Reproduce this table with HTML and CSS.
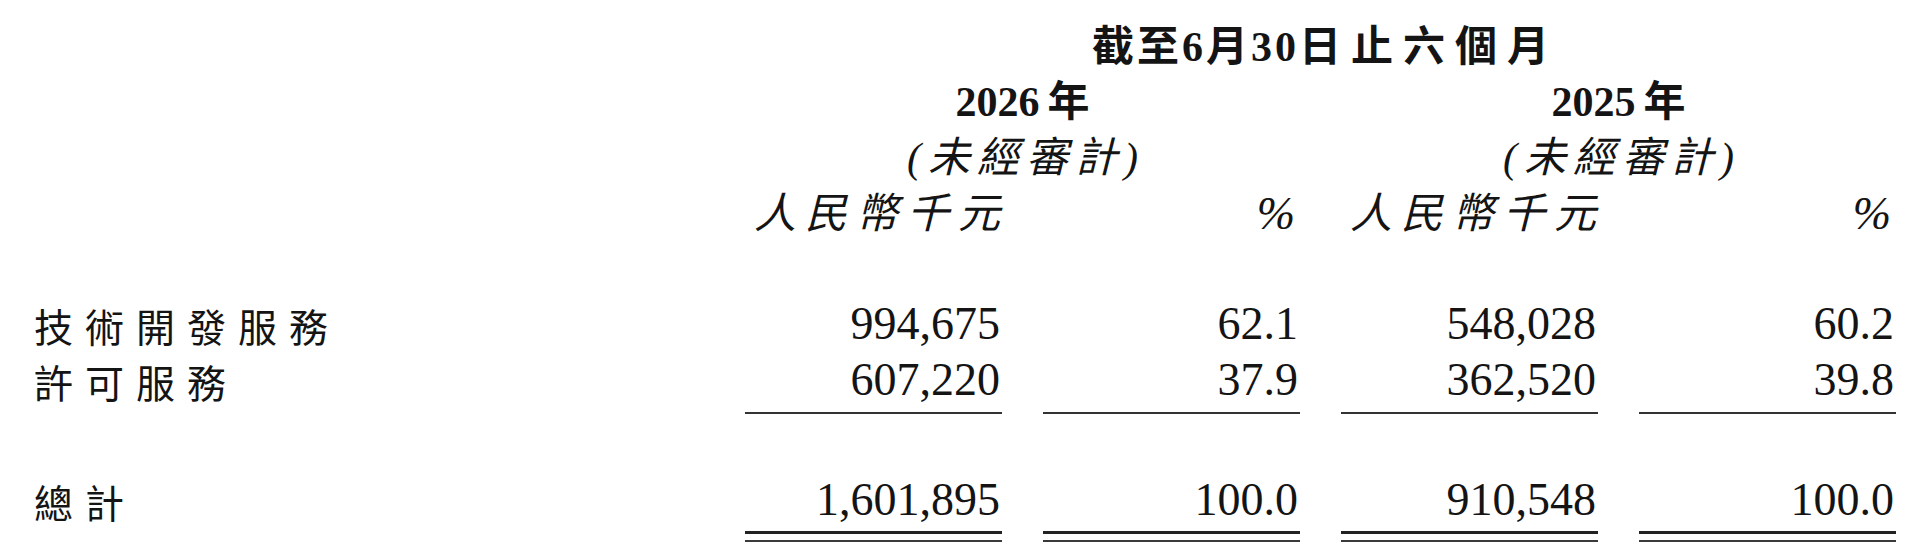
FILE: index.html
```html
<!DOCTYPE html>
<html lang="zh-Hant">
<head>
<meta charset="utf-8">
<title>收入明細</title>
<link rel="stylesheet" href="styles.css">
</head>
<body>
<div class="sheet">
  <div class="title"><span class="t1">截至6月30日</span><span class="t2">止六個月</span></div>

  <div class="year span-a">2026<span class="nian">年</span></div>
  <div class="year span-b">2025<span class="nian">年</span></div>

  <div class="audit span-a">(未經審計)</div>
  <div class="audit span-b">(未經審計)</div>

  <div class="unit c2">人民幣千元</div>
  <div class="pct c3">%</div>
  <div class="unit c4">人民幣千元</div>
  <div class="pct c5">%</div>

  <div class="label first">技術開發服務</div>
  <div class="num first">994,675</div>
  <div class="num first">62.1</div>
  <div class="num first">548,028</div>
  <div class="num first">60.2</div>

  <div class="label">許可服務</div>
  <div class="num sub">607,220</div>
  <div class="num sub">37.9</div>
  <div class="num sub">362,520</div>
  <div class="num sub">39.8</div>

  <div class="label total">總計</div>
  <div class="num total dbl">1,601,895</div>
  <div class="num total dbl">100.0</div>
  <div class="num total dbl">910,548</div>
  <div class="num total dbl">100.0</div>
</div>
</body>
</html>
```

FILE: styles.css
```css
html, body {
  margin: 0;
  padding: 0;
  background: #ffffff;
}

body {
  font-family: "Liberation Serif", "Noto Sans CJK TC", serif;
  color: #141414;
}

.sheet {
  display: grid;
  grid-template-columns: 670px repeat(4, 257px);
  column-gap: 41px;
  padding: 20px 24px 0 34px;
}

/* header */
.title {
  grid-column: 2 / 6;
  text-align: center;
  font-size: 42px;
  line-height: 54px;
  font-weight: 700;
}
.t1 { letter-spacing: 3px; }
.t2 {
  letter-spacing: 10px;
  margin-left: 7px;
  margin-right: -10px;
}

.span-a { grid-column: 2 / 4; }
.span-b { grid-column: 4 / 6; }

.year {
  text-align: center;
  font-size: 42px;
  line-height: 56px;
  font-weight: 700;
}
.nian { margin-left: 8px; }

.audit {
  text-align: center;
  font-size: 42px;
  line-height: 56px;
  font-style: italic;
  letter-spacing: 7px;
  padding-left: 7px;
}

.unit, .pct {
  font-size: 42px;
  line-height: 56px;
  font-style: italic;
  text-align: right;
}
.unit {
  letter-spacing: 9px;
  margin-right: -7px;
}
.pct {
  font-size: 46px;
  padding-right: 5px;
}
.c2 { grid-column: 2; }
.c3 { grid-column: 3; }
.c4 { grid-column: 4; }
.c5 { grid-column: 5; }

/* body rows */
.label {
  grid-column: 1;
  font-size: 39px;
  line-height: 56px;
  letter-spacing: 12px;
  padding-top: 5px;
  margin-bottom: -5px;
}

.num {
  font-size: 46px;
  line-height: 56px;
  text-align: right;
  padding-right: 2px;
}

.first { margin-top: 54px; }

.sub {
  padding-bottom: 6px;
  background: linear-gradient(#333333, #333333) left bottom / 100% 2px no-repeat;
}

.total { margin-top: 58px; }

.dbl {
  padding-bottom: 14px;
  background:
    linear-gradient(#222222, #222222) left calc(100% - 8px) / 100% 3px no-repeat,
    linear-gradient(#3a3a3a, #3a3a3a) left bottom / 100% 2px no-repeat;
}
```
